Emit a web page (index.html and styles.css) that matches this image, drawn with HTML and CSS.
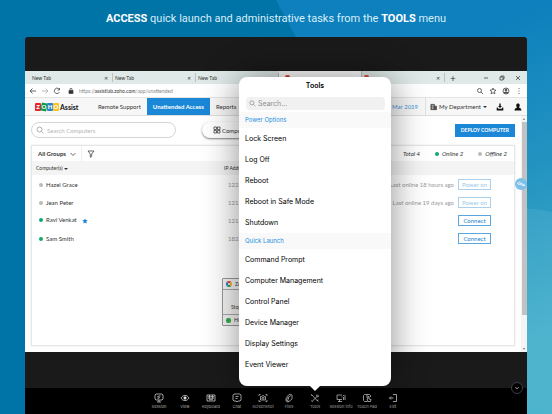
FILE: index.html
```html
<!DOCTYPE html>
<html lang="en">
<head>
    <meta charset="UTF-8">
    <meta name="viewport" content="width=device-width, initial-scale=1.0">
    <title>Zoho Assist - Tools menu</title>
    <link rel="stylesheet" href="styles.css">
</head>
<body>
    <div class="page">
        <h1 class="headline"><strong>ACCESS</strong> quick launch and administrative tasks from the <strong>TOOLS</strong> menu</h1>

        <div class="device">
            <!-- Remote desktop -->
            <div class="remote">
                <div class="tab-bar">
                    <div class="tab"><span>New Tab</span><button aria-label="Close tab">✕</button></div>
                    <div class="tab"><span>New Tab</span><button aria-label="Close tab">✕</button></div>
                    <div class="tab"><span>New Tab</span><button aria-label="Close tab">✕</button></div>
                    <div class="tab active"><i class="favicon"></i></div>
                    <div class="tab"><i class="favicon"></i><button aria-label="Close tab">✕</button></div>
                    <button class="new-tab" aria-label="New tab">+</button>
                    <div class="window-buttons">
                        <svg viewBox="0 0 6 6"><path d="M1 3h4"/></svg>
                        <svg viewBox="0 0 6 6"><path d="M1 2h3v3H1zM2 2V1h3v3H4"/></svg>
                        <svg viewBox="0 0 6 6"><path d="M1 1l4 4M5 1L1 5"/></svg>
                    </div>
                </div>

                <div class="address-bar">
                    <svg viewBox="0 0 8 8"><path d="M7 4H1M3.500 1.500L1 4l2.500 2.500"/></svg>
                    <svg class="muted" viewBox="0 0 8 8"><path d="M1 4h6M4.500 1.500L7 4 4.500 6.500"/></svg>
                    <svg viewBox="0 0 8 8"><path d="M6.500 5A2.700 2.700 0 1 1 6 2M6.500 1v2h-2"/></svg>
                    <svg class="lock" viewBox="0 0 8 8"><path d="M2 3.500h4v3H2z" fill="#333"/><path d="M3 3.500V2.300a1 1 0 0 1 2 0v1.200"/></svg>
                    <span class="url">https://<b>assistlab.zoho.com</b>/app/unattended</span>
                    <div class="address-actions">
                        <svg viewBox="0 0 8 8"><circle cx="3.500" cy="3.500" r="2"/><path d="M5 5l2 2"/></svg>
                        <svg viewBox="0 0 8 8"><path d="M4 1l.9 2 2.100.2-1.600 1.400.5 2.200L4 5.700 2.100 6.800l.5-2.200L1 3.200 3.100 3z"/></svg>
                        <svg viewBox="0 0 8 8"><circle cx="4" cy="4" r="3"/><circle cx="4" cy="3" r="1" fill="#444"/><path d="M2 6c1-1.300 3-1.300 4 0z" fill="#444"/></svg>
                        <svg viewBox="0 0 8 8"><path d="M4 1v1M4 3.500v1M4 6v1"/></svg>
                    </div>
                </div>

                <header class="app-header">
                    <a href="#" class="logo">
                        <span class="logo-blocks"><i>Z</i><i>O</i><i>H</i><i>O</i></span>
                        <span class="logo-text">Assist</span>
                    </a>
                    <nav class="nav">
                        <a href="#">Remote Support</a>
                        <a href="#" class="active">Unattended Access</a>
                        <a href="#">Reports</a>
                    </nav>
                    <span class="expiry">11 Mar 2019</span>
                    <button class="department">
                        <svg viewBox="0 0 8 8"><path d="M1 1h4v6H1zM5 3h2.500v4H5" fill="#555"/><path d="M2 2.500h2M2 4h2M2 5.500h2" stroke="#eee"/></svg>
                        My Department <i class="caret"></i>
                    </button>
                    <svg class="header-icon" viewBox="0 0 8 8"><path d="M3.300.5h1.400v2.500H6L4 5 2 3h1.300zM.7 4.500h1l.5 1.200h3.600l.5-1.200h1v3H.7z"/></svg>
                    <svg class="header-icon" viewBox="0 0 8 8"><path d="M4 .5c2.200 0 2.100 2.700 1 3.800.2.900 2.500.7 2.500 3.200h-7C.5 5 2.800 5.200 3 4.300 1.900 3.200 1.800.5 4 .5z"/></svg>
                </header>

                <div class="workspace">
                    <main class="content">
                        <div class="filters">
                            <label class="search-box">
                                <svg viewBox="0 0 8 8"><circle cx="3.500" cy="3.500" r="2.500"/><path d="M5.500 5.500l2 2"/></svg>
                                <input type="text" placeholder="Search Computers" aria-label="Search Computers">
                            </label>
                            <button class="view-button">
                                <svg viewBox="0 0 8 8"><path d="M1 1h2.500v2.500H1zM4.500 1H7v2.500H4.500zM1 4.500h2.500V7H1zM4.500 4.500H7V7H4.500z"/></svg>
                                Computers
                            </button>
                            <button class="deploy">DEPLOY COMPUTER</button>
                        </div>

                        <section class="panel">
                            <div class="panel-bar">
                                <button class="groups">All Groups
                                    <svg viewBox="0 0 8 8"><path d="M1.500 3L4 5.500 6.500 3"/></svg>
                                </button>
                                <svg class="filter" viewBox="0 0 8 8"><path d="M1 1h6L4.700 4v2.500l-1.400.8V4z"/></svg>
                                <div class="totals">
                                    <span>Total 4</span>
                                    <span><i class="dot online"></i>Online 2</span>
                                    <span><i class="dot"></i>Offline 2</span>
                                </div>
                            </div>
                            <table class="computers">
                                <colgroup>
                                    <col class="col-name">
                                    <col class="col-ip">
                                    <col>
                                    <col class="col-action">
                                </colgroup>
                                <thead>
                                    <tr><th>Computer(s) <i class="caret"></i></th><th>IP Address</th><th></th><th></th></tr>
                                </thead>
                                <tbody>
                                    <tr><td><i class="dot"></i>Hazel Grace</td><td class="ip">122.1</td><td class="last">Last online 18 hours ago</td><td class="action"><button disabled>Power on</button></td></tr>
                                    <tr><td><i class="dot"></i>Jean Peter</td><td class="ip">121.2</td><td class="last">Last online 19 days ago</td><td class="action"><button disabled>Power on</button></td></tr>
                                    <tr><td><i class="dot online"></i>Ravi Venkat <svg class="star" viewBox="0 0 8 8"><path d="M4 .5l1.100 2.300 2.500.3-1.900 1.700.5 2.600L4 6.200 1.800 7.400l.5-2.600L.4 3.100l2.500-.3z"/></svg></td><td class="ip">121.2</td><td class="last"></td><td class="action"><button>Connect</button></td></tr>
                                    <tr><td><i class="dot online"></i>Sam Smith</td><td class="ip">182.7</td><td class="last"></td><td class="action"><button>Connect</button></td></tr>
                                </tbody>
                            </table>
                        </section>
                    </main>
                    <div class="scrollbar"><i class="up"></i><div class="thumb"></div><i class="down"></i></div>
                </div>

                <div class="toast">
                    <div class="toast-title"><i class="ring"></i>Zoho</div>
                    <div class="toast-body">Stop</div>
                    <div class="toast-foot"><i class="badge"></i>Hide</div>
                </div>
                <div class="bubble">
                    <svg viewBox="0 0 12 12"><path d="M2 5.500l2.500-1 5 2.500M3 6.500l2-.5 2.500 1.500h2.500"/></svg>
                </div>
            </div>

            <!-- Session toolbar -->
            <div class="toolbar">
                <button class="tool"><svg viewBox="0 0 10 10"><path d="M2 1h6l1 1v4L8 7H2L1 6V2zM3 9h4M5 7v2M6.500 3h-2L3.500 4l2 .5-1 1.200h-1"/></svg>Session</button>
                <button class="tool"><svg viewBox="0 0 10 10"><path d="M1 5c2-3.500 6-3.500 8 0-2 3.500-6 3.500-8 0z"/><circle cx="5" cy="5" r="1.200" fill="#fff"/></svg>View</button>
                <button class="tool"><svg viewBox="0 0 10 10"><path d="M1 2h8v6H1zM2 3.700h6M2 5.200h6M3 6.700h4M3.500 2v3.500M6.500 2v3.500"/></svg>Keyboard</button>
                <button class="tool"><svg viewBox="0 0 10 10"><path d="M2 1h6l1 1v5L8 8H6L5 9 4 8H2L1 7V2zM3.500 3.500h3M3.500 5.500h2"/></svg>Chat</button>
                <button class="tool"><svg viewBox="0 0 10 10"><path d="M1 3V1.500h1.500M7.500 1.500H9V3M9 7v1.500H7.500M2.500 8.500H1V7M2.500 3.500h1.300l.5-.8h1.400l.5.800h1.300v3.500h-5z"/><circle cx="5" cy="5.200" r="1"/></svg>Screenshot</button>
                <button class="tool"><svg viewBox="0 0 10 10"><path d="M3 3.500L6 1l2 1v4L5 8.500 3 7.500zM4.500 6.500V4L7 2.500M3 4.500l-1 1V8l2 1 1-.7"/></svg>Files</button>
                <div class="tool-wrap">
                    <button class="tool"><svg viewBox="0 0 10 10"><path d="M1.500 1.500L8 8.500M1.500 1.500l.5 1.500M8.500 2L2 8.500M7 1.500L6.500 3l1 .8L9 3M7 7.500l1.500-.5M1.500 7.500l1 1.200"/></svg>Tools</button>
                    <div class="popover">
                        <h2>Tools</h2>
                        <label class="popover-search">
                            <svg viewBox="0 0 8 8"><circle cx="3.300" cy="3.300" r="2.300"/><path d="M5 5l2.300 2.300"/></svg>
                            <input type="text" placeholder="Search..." aria-label="Search tools">
                        </label>
                        <h3>Power Options</h3>
                        <ul>
                            <li><button>Lock Screen</button></li>
                            <li><button>Log Off</button></li>
                            <li><button>Reboot</button></li>
                            <li><button>Reboot in Safe Mode</button></li>
                            <li><button>Shutdown</button></li>
                        </ul>
                        <h3>Quick Launch</h3>
                        <ul>
                            <li><button>Command Prompt</button></li>
                            <li><button>Computer Management</button></li>
                            <li><button>Control Panel</button></li>
                            <li><button>Device Manager</button></li>
                            <li><button>Display Settings</button></li>
                            <li><button>Event Viewer</button></li>
                        </ul>
                    </div>
                </div>
                <button class="tool"><svg viewBox="0 0 10 10"><path d="M6 2H1v4.500h5M2 8.500h4M3.500 6.500v2M7.500 2v1M7.500 4v3M9 2v5M5.500 4h1"/></svg>Session info</button>
                <button class="tool"><svg viewBox="0 0 10 10"><path d="M8.500 4V2.500l-1-1h-5l-1 1v5l1 1h3M5 1.500V5M6 8.500L5 6l1-.5V3.500h1V6l2 .5-.5 2z"/></svg>Touch Pad</button>
                <button class="tool"><svg viewBox="0 0 10 10"><path d="M5 1.500h3.500v7H5M1.500 5h4M3 3.500L1.500 5 3 6.500"/></svg>Exit</button>
                <button class="collapse" aria-label="Hide toolbar"><svg viewBox="0 0 12 12"><path d="M4 5l2 2 2-2"/></svg></button>
            </div>
        </div>
    </div>
</body>
</html>
```
FILE: styles.css
```css
* {
    box-sizing: border-box;
}

body {
    margin: 0;
    font-family: Lato, sans-serif;
    font-size: 6px;
    color: #333;
}

button,
input {
    font: inherit;
    color: inherit;
    background: none;
    border: none;
    margin: 0;
    padding: 0;
}

button {
    cursor: pointer;
    white-space: nowrap;
}

a {
    color: inherit;
    text-decoration: none;
}

svg {
    display: block;
    flex: none;
    width: 8px;
    height: 8px;
    fill: none;
    stroke: #444;
    stroke-width: 0.8;
}

/* Page */
.page {
    position: relative;
    display: flex;
    flex-direction: column;
    min-height: 100vh;
    padding: 0 25px;
    overflow: hidden;
    background: radial-gradient(circle at 94% 84%, rgba(255, 255, 255, 0.07) 139px, transparent 140px),
        linear-gradient(155deg, #0d80bd 38%, #2394c1 62%, #40aeca 88%);
}

.page::before {
    content: "";
    position: absolute;
    inset: 0;
    background: #0073a7;
    clip-path: polygon(0 0, 50% 0, 90% 100%, 0 100%);
}

.headline {
    position: relative;
    margin: 0;
    height: 37px;
    font-family: Roboto, sans-serif;
    font-size: 11px;
    font-weight: 400;
    line-height: 37px;
    text-align: center;
    white-space: nowrap;
    color: #d9eef8;
}

.headline strong {
    font-weight: 700;
    color: #fff;
}

.device {
    position: relative;
    display: flex;
    flex-direction: column;
    flex: 1;
    padding-top: 34px;
    border-radius: 3px 3px 0 0;
    background: #1a1a1a;
}

/* Remote desktop */
.remote {
    position: relative;
    display: flex;
    flex-direction: column;
    flex: 1;
    margin-bottom: 36px;
    background: #fff;
}

.tab-bar {
    display: flex;
    align-items: center;
    height: 13px;
    padding-left: 5px;
    font-size: 5px;
    background: #dfeae8;
}

.tab {
    display: flex;
    align-items: center;
    gap: 3px;
    width: 83px;
    height: 9px;
    padding: 0 4px 0 2px;
    border-right: 1px solid #b9c4c2;
}

.tab button {
    margin-left: auto;
}

.tab.active {
    height: 13px;
    padding-left: 6px;
    background: #fff;
}

.favicon {
    width: 5px;
    height: 5px;
    border-radius: 2px;
    background: #e4483d;
}

.new-tab {
    margin-left: 5px;
    font-size: 10px;
    line-height: 10px;
}

.window-buttons {
    display: flex;
    gap: 10px;
    margin: 0 6px 0 auto;
}

.window-buttons svg {
    width: 6px;
    height: 6px;
}

.address-bar {
    display: flex;
    align-items: center;
    gap: 4px;
    height: 13px;
    padding: 0 4px;
    color: #888;
}

.address-bar .muted {
    stroke: #aaa;
}

.address-bar .lock {
    margin-left: 2px;
}

.url {
    font-size: 5px;
}

.url b {
    font-weight: 400;
    color: #333;
}

.address-actions {
    display: flex;
    gap: 5px;
    margin-left: auto;
}

.app-header {
    display: flex;
    align-items: center;
    height: 19px;
    padding-right: 5px;
    border-top: 1px solid #e4e4e4;
    border-bottom: 1px solid #dedede;
    background: #f7f7f7;
}

.logo {
    display: flex;
    align-items: center;
    gap: 1px;
    width: 67px;
    padding-left: 10px;
}

.logo-blocks {
    display: flex;
}

.logo-blocks i {
    position: relative;
    z-index: 0;
    width: 6px;
    height: 8px;
    font-size: 6px;
    font-style: normal;
    font-weight: 900;
    line-height: 8px;
    text-align: center;
    color: #fff;
}

.logo-blocks i::before {
    content: "";
    position: absolute;
    z-index: -1;
    inset: 0;
    border-radius: 1px;
    background: #e42527;
}

.logo-blocks i:nth-child(2)::before {
    background: #089949;
    transform: rotate(14deg);
}

.logo-blocks i:nth-child(3)::before {
    background: #2a85cc;
}

.logo-blocks i:nth-child(4)::before {
    background: #f9c21d;
}

.logo-text {
    font-size: 7px;
    font-weight: 700;
    color: #111;
}

.nav {
    display: flex;
    align-self: stretch;
}

.nav a {
    display: flex;
    align-items: center;
    padding: 0 6px;
    white-space: nowrap;
}

.nav .active {
    font-weight: 700;
    color: #fff;
    background: #1a87d7;
}

.expiry {
    margin-left: auto;
    padding-right: 7px;
    white-space: nowrap;
    color: #3a93d6;
}

.department {
    display: flex;
    align-items: center;
    align-self: stretch;
    gap: 2px;
    padding: 0 7px 0 4px;
    border-left: 1px solid #e0e0e0;
}

.department svg {
    width: 7px;
}

.header-icon {
    margin-left: 2px;
    fill: #111;
    stroke: none;
}

.header-icon + .header-icon {
    margin-left: 10px;
}

.caret {
    display: inline-block;
    border: 2px solid transparent;
    border-top: 2px solid #333;
    border-bottom: none;
    vertical-align: middle;
}

.workspace {
    display: flex;
    flex: 1;
}

.content {
    display: flex;
    flex-direction: column;
    flex: 1;
    gap: 7px;
    padding: 6px;
}

.filters {
    display: flex;
    align-items: center;
    height: 16px;
}

.search-box {
    display: flex;
    align-items: center;
    gap: 3px;
    width: 145px;
    height: 16px;
    padding: 0 4px;
    border: 1px solid #d5d5d5;
    border-radius: 8px;
}

.search-box svg {
    stroke: #999;
}

.search-box input {
    flex: 1;
    min-width: 0;
}

.search-box input::placeholder {
    color: #b5b5b5;
}

.view-button {
    display: flex;
    align-items: center;
    gap: 1px;
    height: 16px;
    margin-left: 26px;
    padding: 0 11px;
    border-radius: 8px;
    box-shadow: 0 1px 2px rgba(0, 0, 0, 0.5);
}

.deploy {
    height: 13px;
    margin-left: auto;
    padding: 0 6px;
    font-size: 5px;
    font-weight: 700;
    color: #fff;
    background: #1a87d7;
}

.panel {
    flex: 1;
    border: 1px solid #e6e6e6;
    box-shadow: 0 0 2px rgba(0, 0, 0, 0.1);
}

.panel-bar {
    display: flex;
    align-items: center;
    height: 15px;
}

.groups {
    display: flex;
    align-items: center;
    align-self: stretch;
    gap: 3px;
    padding: 0 4px 0 6px;
    font-weight: 700;
    border-right: 1px solid #eee;
}

.filter {
    margin-left: 5px;
}

.totals {
    display: flex;
    gap: 15px;
    margin-left: auto;
    padding-right: 7px;
    font-style: italic;
}

.dot {
    display: inline-block;
    width: 4px;
    height: 4px;
    margin-right: 3px;
    border-radius: 50%;
    background: #bbb;
}

.dot.online {
    background: #14a674;
}

.computers {
    width: 100%;
    border-collapse: collapse;
    table-layout: fixed;
}

.col-name {
    width: 188px;
}

.col-ip {
    width: 60px;
}

.col-action {
    width: 60px;
}

.computers th {
    height: 14px;
    padding: 0 4px;
    font-size: 5px;
    font-weight: 400;
    text-align: left;
    background: #f4f4f4;
}

.computers td {
    height: 18px;
    padding: 0 7px;
    white-space: nowrap;
}

.computers .ip {
    padding-left: 8px;
    color: #999;
}

.computers .last {
    padding: 0;
    text-align: right;
    color: #999;
}

.computers .action {
    padding: 0 23px 0 4px;
}

.action button {
    display: block;
    width: 33px;
    height: 11px;
    color: #1a7fd0;
    border: 1px solid #5ba6de;
}

.action button:disabled {
    color: #9dcaeb;
    border-color: #a9d0ec;
}

.star {
    display: inline-block;
    width: 6px;
    height: 6px;
    margin-left: 4px;
    vertical-align: middle;
    fill: #1a87d7;
    stroke: none;
}

.scrollbar {
    display: flex;
    flex-direction: column;
    align-items: center;
    gap: 2px;
    width: 6px;
    padding: 2px 0;
    background: #f4f4f4;
}

.scrollbar i {
    border: 1px solid transparent;
    border-bottom: 2px solid #777;
    border-top: none;
}

.scrollbar .down {
    margin-top: auto;
    border-top: 2px solid #777;
    border-bottom: none;
}

.thumb {
    width: 5px;
    height: 83%;
    background: #c2c2c2;
}

.toast {
    position: absolute;
    right: 240px;
    bottom: 26px;
    width: 65px;
    border: 1px solid #999;
    border-radius: 1px;
    font-size: 5px;
    background: #f6f6f6;
}

.toast-title,
.toast-foot {
    display: flex;
    align-items: center;
    gap: 3px;
    height: 10px;
    padding-left: 3px;
}

.toast-body {
    height: 26px;
    padding: 14px 0 0 8px;
    border: solid #aaa;
    border-width: 1px 0;
}

.ring {
    width: 6px;
    height: 6px;
    border: 2px solid;
    border-color: #e0463a #f2b81f #2b9f58 #3b7ad0;
    border-radius: 50%;
}

.badge {
    width: 5px;
    height: 5px;
    border-radius: 2px;
    background: #35b04a;
}

.bubble {
    position: absolute;
    top: 107px;
    right: 0;
    width: 12px;
    height: 12px;
    border-radius: 50%;
    background: #7fc0ea;
}

.bubble svg {
    width: 12px;
    height: 12px;
    stroke: #fff;
}

/* Session toolbar */
.toolbar {
    position: relative;
    display: flex;
    justify-content: center;
    height: 26px;
    background: #000;
}

.tool {
    display: flex;
    flex-direction: column;
    align-items: center;
    gap: 1px;
    width: 26px;
    padding-top: 5px;
    font-family: Inter, sans-serif;
    font-size: 4px;
    line-height: 6px;
    color: #aaa;
}

.tool svg {
    width: 10px;
    height: 10px;
    stroke: #ccc;
}

.tool-wrap {
    position: relative;
}

.collapse {
    position: absolute;
    top: -6px;
    right: 4px;
    width: 12px;
    height: 12px;
    border: 1px solid #3d3d4d;
    border-radius: 50%;
    background: #000;
}

.collapse svg {
    width: 10px;
    height: 10px;
    stroke: #fff;
}

/* Tools popover */
.popover {
    position: absolute;
    bottom: 28px;
    left: 50%;
    width: 152px;
    padding-bottom: 11px;
    border-radius: 8px;
    font-family: Inter, sans-serif;
    font-size: 7px;
    font-weight: 400;
    color: #000;
    background: #fff;
    box-shadow: 0 0 36px rgba(0, 0, 0, 0.45);
    transform: translateX(-50%);
}

.popover::after {
    content: "";
    position: absolute;
    top: 100%;
    left: 50%;
    margin-left: -5px;
    border: 5px solid transparent;
    border-top-color: #fff;
    border-bottom: none;
}

.popover h2 {
    margin: 0;
    height: 20px;
    font-size: 7px;
    font-weight: 600;
    line-height: 17px;
    text-align: center;
}

.popover-search {
    display: flex;
    align-items: center;
    gap: 2px;
    height: 13px;
    margin: 0 6px 2px 7px;
    padding: 0 3px;
    border-radius: 4px;
    background: #f1f1f2;
}

.popover-search svg {
    width: 7px;
    height: 7px;
    stroke: #888;
}

.popover-search input {
    flex: 1;
    min-width: 0;
}

.popover-search input::placeholder {
    color: #8e8e93;
}

.popover h3 {
    margin: 0;
    padding-left: 6px;
    font-size: 6px;
    font-weight: 400;
    line-height: 16px;
    color: #1d8fe0;
    background: #f9f9f9;
}

.popover ul {
    margin: 0;
    padding: 0;
    list-style: none;
}

.popover li button {
    display: block;
    width: 100%;
    height: 21px;
    padding-left: 6px;
    text-align: left;
}
```
